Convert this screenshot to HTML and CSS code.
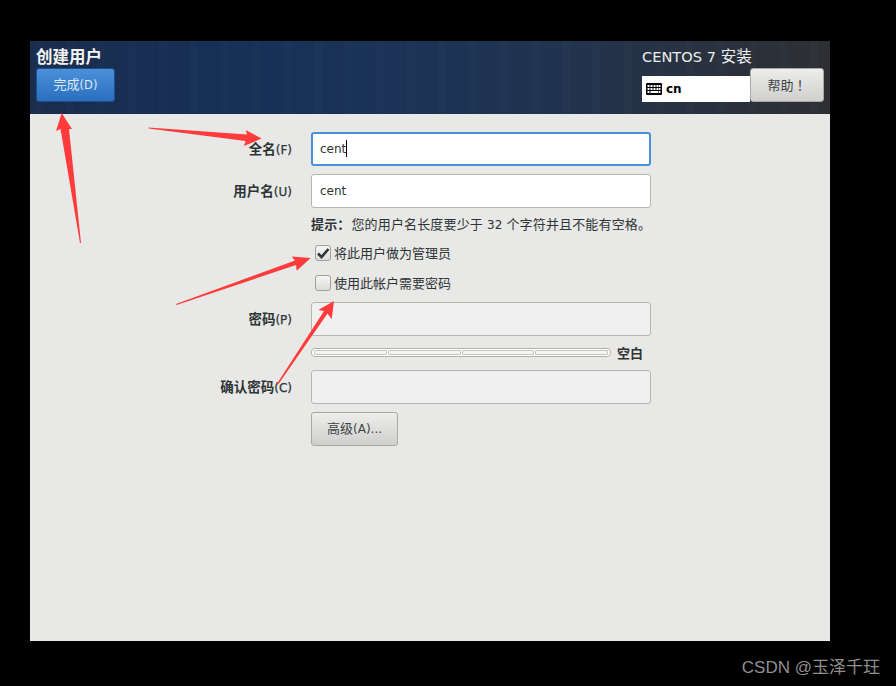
FILE: index.html
```html
<!DOCTYPE html>
<html lang="zh">
<head>
<meta charset="utf-8">
<title>创建用户</title>
<link rel="stylesheet" href="styles.css">
</head>
<body>
<div class="screen">
  <header class="topbar">
    <div class="spoke">
      <h1 class="spoke-title">创建用户</h1>
      <button class="btn btn-done">完成<span class="lat">(D)</span></button>
    </div>
    <div class="install">
      <div class="install-title"><span class="lat-title">CENTOS 7</span> 安装</div>
      <div class="install-row">
        <div class="layout">
          <svg class="kbd" width="16" height="12" viewBox="0 0 16 12">
            <rect width="16" height="12" rx="1" fill="#000"/>
            <g fill="#fff">
              <rect x="1.5" y="2" width="2" height="2"/><rect x="4.5" y="2" width="2" height="2"/><rect x="7.5" y="2" width="2" height="2"/><rect x="10.5" y="2" width="2" height="2"/><rect x="13" y="2" width="1.5" height="2"/>
              <rect x="1.5" y="5" width="2" height="2"/><rect x="4.5" y="5" width="2" height="2"/><rect x="7.5" y="5" width="2" height="2"/><rect x="10.5" y="5" width="2" height="2"/><rect x="13" y="5" width="1.5" height="2"/>
              <rect x="1.5" y="8" width="2" height="2"/><rect x="4.5" y="8" width="8" height="2"/><rect x="13" y="8" width="1.5" height="2"/>
            </g>
          </svg>
          <span class="lat">cn</span>
        </div>
        <button class="btn btn-help">帮助<span class="bang">！</span></button>
      </div>
    </div>
  </header>
  <main class="form">
    <label class="lbl row-name">全名<span class="lat">(F)</span></label>
    <div class="input focus row-name lat">cent<span class="caret"></span></div>
    <label class="lbl row-user">用户名<span class="lat">(U)</span></label>
    <div class="input row-user lat">cent</div>
    <div class="hint"><b>提示：</b>您的用户名长度要少于<span class="lat"> 32 </span>个字符并且不能有空格。</div>
    <div class="check c1"><span class="box"><svg width="14" height="12" viewBox="0 0 14 12"><path d="M2 6.5 5.5 10 12.5 2" fill="none" stroke="#2e3436" stroke-width="2.6"/></svg></span>将此用户做为管理员</div>
    <div class="check c2"><span class="box"></span>使用此帐户需要密码</div>
    <label class="lbl row-pw">密码<span class="lat">(P)</span></label>
    <div class="input off row-pw"></div>
    <div class="strength">
      <div class="meter"><i></i><i></i><i></i><i></i></div>
      <b class="strength-label">空白</b>
    </div>
    <label class="lbl row-cf">确认密码<span class="lat">(C)</span></label>
    <div class="input off row-cf"></div>
    <button class="btn btn-adv">高级<span class="lat">(A)...</span></button>
  </main>
</div>
<svg class="arrows" width="896" height="686" viewBox="0 0 896 686">
  <g fill="#ff3b3b">
    <polygon points="148.5,127.5 247,134.5 245.7,130 261.7,138.5 244,146 245.5,141 148.5,128.5"/>
    <polygon points="61.7,113 72,129 69,129 81,243 80,243 60.5,129 56,131"/>
    <polygon points="176,304 295,260.5 291.7,256.5 310.7,258 296.7,270.7 296,265 176.5,305"/>
    <polygon points="276.8,384 324,311 318.3,310 334,301 331.7,319.3 327.5,313.5 277.8,385"/>
  </g>
</svg>
<div class="mark">CSDN @玉泽千玨</div>
</body>
</html>
```

FILE: styles.css
```css
* { box-sizing: border-box; }
html, body { margin: 0; height: 100%; }
body {
  background: #000;
  width: 896px;
  height: 686px;
  overflow: hidden;
  position: relative;
  font-family: "DejaVu Sans", "Noto Sans CJK SC", sans-serif;
  font-size: 13px;
  color: #2e3436;
  padding: 41px 66px 45px 30px;
}
.lat { font-size: 12px; font-weight: 400; }
.lat-title { font-size: 14.6px; }
.screen { width: 800px; height: 600px; background: #e8e8e6; display: flex; flex-direction: column; }
.topbar {
  height: 73px;
  flex: none;
  display: flex;
  justify-content: space-between;
  padding: 6px 6px 0 6px;
  background:
    repeating-linear-gradient(90deg, rgba(0,0,0,.025) 0, rgba(0,0,0,.025) 5px, rgba(255,255,255,.008) 5px, rgba(255,255,255,.008) 13px, rgba(0,0,0,.015) 13px, rgba(0,0,0,.015) 31px),
    linear-gradient(90deg, #1a2e4e 0%, #182f55 15%, #183158 28%, #1b3358 42%, #1e3455 55%, #22344f 68%, #2a3240 85%, #2e3034 100%);
}
.spoke-title { margin: 1px 0 -1px; font-size: 16.5px; line-height: 20px; font-weight: 700; color: #f4f4f4; }
.spoke { display: flex; flex-direction: column; gap: 1px; }
.btn {
  font: inherit;
  font-size: 13px;
  border-radius: 3px;
  padding: 0 0 1px;
  display: flex;
  align-items: baseline;
  justify-content: center;
  line-height: 32px;
}
.btn-done {
  width: 79px;
  height: 34px;
  color: #dfe9f6;
  background: linear-gradient(#4a90d9, #2a6fbe);
  border: 1px solid #1d4f8e;
}
.btn-done .lat { font-size: 11.5px; }
.install { display: flex; flex-direction: column; width: 182px; }
.install-title { color: #eeeeec; font-size: 15.5px; line-height: 20px; white-space: nowrap; }
.install-row { display: flex; margin-top: 1px; height: 34px; align-items: flex-start; }
.layout {
  width: 108px;
  height: 26px;
  margin-top: 8px;
  background: #fff;
  color: #000;
  display: flex;
  align-items: center;
  gap: 4px;
  padding-left: 4px;
}
.layout .lat { font-weight: 700; }
.btn-help {
  width: 74px;
  height: 34px;
  color: #3d4446;
  background: linear-gradient(#ededeb, #cfcfcd);
  border: 1px solid #a8a8a4;
}
.bang { font-family: "Noto Sans CJK TC", sans-serif; }
.form {
  display: grid;
  grid-template-columns: 262px 340px;
  column-gap: 19px;
  grid-auto-rows: min-content;
  padding-top: 18px;
}
.lbl { font-size: 13.5px; font-weight: 700; text-align: right; color: #2e3436; align-self: center; position: relative; top: -1px; }
.lbl .lat { -webkit-text-stroke: .25px #2e3436; }
.input {
  height: 34px;
  border: 1px solid #b6b6b3;
  border-radius: 3px;
  background: #fff;
  padding: 0 8px;
  line-height: 32px;
  grid-column: 2;
}
.focus { border: 2px solid #4a90d9; line-height: 30px; padding: 0 7px; }
.caret { display: inline-block; width: 1px; height: 17px; background: #000; vertical-align: -4px; }
.off { background: #f0f0f0; }
.row-user { margin-top: 8px; }
.hint { grid-column: 2; margin-top: 8px; line-height: 18px; white-space: nowrap; letter-spacing: .15px; }
.hint b { font-weight: 700; margin-right: 1px; }
.check { grid-column: 2; display: flex; align-items: center; gap: 3px; height: 19px; margin-top: 9px; margin-left: 4px; }
.c2 { margin-top: 11px; }
.box {
  width: 16px;
  height: 16px;
  border: 1px solid #a0a09c;
  border-radius: 3px;
  background: linear-gradient(#f6f6f5, #dcdcda);
  display: flex;
  align-items: center;
  justify-content: center;
}
.row-pw { margin-top: 10px; }
.strength { grid-column: 2; display: flex; align-items: center; margin-top: 7px; height: 18px; gap: 6px; white-space: nowrap; }
.meter {
  width: 300px;
  height: 9px;
  border: 1px solid #b0b0ac;
  border-radius: 4px;
  background: #fff;
  display: flex;
  gap: 1px;
  padding: 1px 2px;
  flex: none;
}
.meter i { flex: 1; border: 1px solid #c4c4c0; background: #f4f4f4; border-radius: 1px; }
.strength-label { font-weight: 700; }
.row-cf { margin-top: 9px; }
.btn-adv {
  grid-column: 2;
  margin-top: 8px;
  width: 87px;
  height: 34px;
  color: #3d4446;
  background: linear-gradient(#ededeb, #cfcfcd);
  border: 1px solid #a8a8a4;
}
.arrows { position: absolute; left: 0; top: 0; pointer-events: none; }
.mark { position: absolute; right: 16px; bottom: 7px; color: #8f8f8f; font-size: 17px; line-height: 22px; font-family: "Liberation Sans", "Noto Sans CJK SC", sans-serif; }
```
